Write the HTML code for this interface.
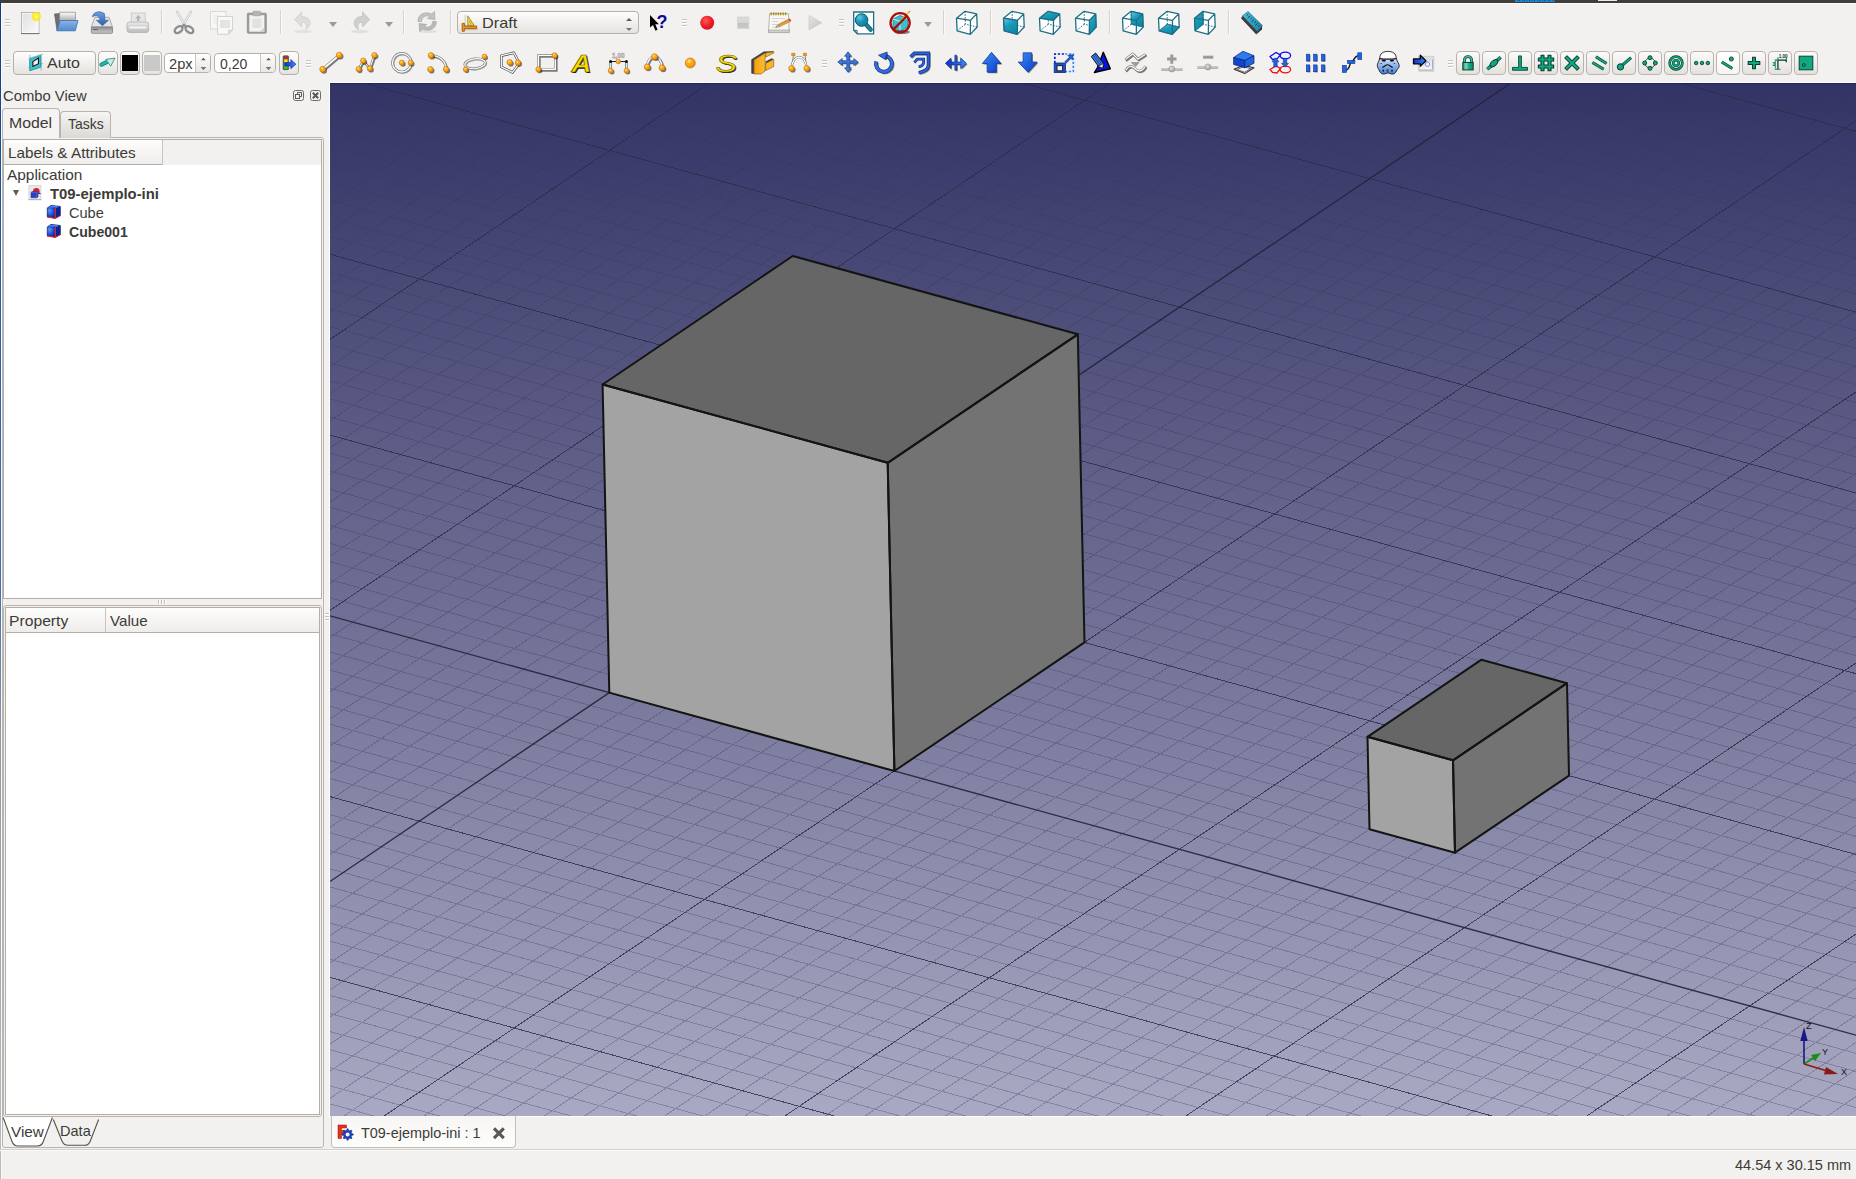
<!DOCTYPE html>
<html lang="es"><head><meta charset="utf-8"><title>FreeCAD</title>
<style>
*{box-sizing:border-box;margin:0;padding:0}
html,body{width:1856px;height:1179px;overflow:hidden;background:#f2f1f0}
body{position:relative;font-family:"Liberation Sans","DejaVu Sans",sans-serif;font-size:15px;color:#3c3b37}
.ic{overflow:visible}
.abs,.ic,.hd,.sp,.da,.sb,.t{position:absolute}
.t{white-space:nowrap;line-height:1;transform-origin:0 0}
.topbar{left:0;top:0;width:1856px;height:3px;background:#403e3a}
.topbar2{left:1px;top:3px;width:1855px;height:1px;background:#fbfaf9}
.leftstrip{left:0;top:2px;width:1px;height:1177px;background:linear-gradient(#0f3a7a 0,#1c5bab 20%,#3f6fae 50%,#8b97aa 62%,#b9bcc2 100%)}
.leftstrip2{left:1px;top:3px;width:1px;height:1176px;background:#fbfaf9}
.hd{width:5px;height:8px;background:linear-gradient(#c8c4bf 0,#c8c4bf 1px,#fff 1px,#fff 2px,transparent 2px,transparent 3px,#c8c4bf 3px,#c8c4bf 4px,#fff 4px,#fff 5px,transparent 5px,transparent 6px,#c8c4bf 6px,#c8c4bf 7px,#fff 7px,#fff 8px)}
.sp{width:2px;height:24px;border-left:1px solid #d6d2cd;border-right:1px solid #fbfaf9}
.da{width:0;height:0;border-left:4.1px solid transparent;border-right:4.1px solid transparent;border-top:5.4px solid #9c9893}
.sb{top:51px;width:24px;height:24px;border:1px solid #b9b4ad;border-radius:4px;background:linear-gradient(#fbfbfa,#e4e1dd)}
.btn{border:1px solid #b5b0a9;border-radius:4px;background:linear-gradient(#fdfdfc,#e6e3df)}
.spin{border:1px solid #b5b0a9;border-radius:4px;background:#fff}
.v3dwrap{left:330px;top:83px;width:1526px;height:1033px;background:linear-gradient(#333365 0,#a9a9c3 100%);overflow:hidden}
.v3d{position:absolute;left:0;top:0}
.frame{border:1px solid #b4aea6;background:#fff}
.hdr{background:linear-gradient(#fdfdfc,#efedeb);border-right:1px solid #c9c4be;border-bottom:1px solid #b4aea6}
.spinr{border-left:1px solid #c9c5bf;border-radius:0 3px 3px 0;background:linear-gradient(#fdfdfc,#e9e7e4)}
.sb.hov{background:linear-gradient(#ffffff,#f6f5f4)}

</style></head>
<body>
<svg width="0" height="0" style="position:absolute"><defs>
<linearGradient id="gpaper" x1="0" y1="0" x2="1" y2="1"><stop offset="0" stop-color="#dedede"/><stop offset="1" stop-color="#fbfbfb"/></linearGradient>
<radialGradient id="gyel"><stop offset="0" stop-color="#ffffe8"/><stop offset=".3" stop-color="#fdf23c"/><stop offset=".75" stop-color="#f6e820" stop-opacity=".9"/><stop offset="1" stop-color="#f6e820" stop-opacity="0"/></radialGradient>
<linearGradient id="gpap2" x1="0" y1="0" x2="0" y2="1"><stop offset="0" stop-color="#fdfdfd"/><stop offset="1" stop-color="#a9a9a9"/></linearGradient>
<linearGradient id="gfold" x1="0" y1="0" x2="0" y2="1"><stop offset="0" stop-color="#8db3e2"/><stop offset="1" stop-color="#4f8bd0"/></linearGradient>
<linearGradient id="gdrive" x1="0" y1="0" x2="0" y2="1"><stop offset="0" stop-color="#8f8f8f"/><stop offset="1" stop-color="#c9c9c9"/></linearGradient>
<linearGradient id="gblue" x1="0" y1="0" x2="0" y2="1"><stop offset="0" stop-color="#6b9fdc"/><stop offset="1" stop-color="#2c62ae"/></linearGradient>
<linearGradient id="gprn" x1="0" y1="0" x2="0" y2="1"><stop offset="0" stop-color="#e9e9e9"/><stop offset="1" stop-color="#bcbcbc"/></linearGradient>
<radialGradient id="gred" cx=".4" cy=".35" r=".7"><stop offset="0" stop-color="#ff5a5a"/><stop offset=".6" stop-color="#ee1c24"/><stop offset="1" stop-color="#d0141c"/></radialGradient>
<linearGradient id="gstop" x1="0" y1="0" x2="0" y2="1"><stop offset="0" stop-color="#dcdcdb"/><stop offset=".5" stop-color="#d6d6d5"/><stop offset=".55" stop-color="#c2c2c1"/><stop offset="1" stop-color="#c9c9c8"/></linearGradient>
<linearGradient id="gplay" x1="0" y1="0" x2="1" y2="1"><stop offset="0" stop-color="#e4e4e3"/><stop offset="1" stop-color="#c3c3c2"/></linearGradient>
<radialGradient id="gteal" cx=".35" cy=".3" r=".8"><stop offset="0" stop-color="#63c7e8"/><stop offset=".5" stop-color="#1593b3"/><stop offset="1" stop-color="#0d7f9c"/></radialGradient>
<linearGradient id="gface" x1="0" y1="0" x2=".6" y2="1"><stop offset="0" stop-color="#6ccaf0"/><stop offset=".45" stop-color="#1d9bbb"/><stop offset="1" stop-color="#0b88a4"/></linearGradient>
<linearGradient id="gruler" x1="0" y1="0" x2="1" y2="1"><stop offset="0" stop-color="#4fc0e6"/><stop offset="1" stop-color="#1685a6"/></linearGradient>
<radialGradient id="gball" cx=".38" cy=".32" r=".75"><stop offset="0" stop-color="#ffe9a8"/><stop offset=".3" stop-color="#ffb320"/><stop offset="1" stop-color="#ee8600"/></radialGradient>
<linearGradient id="gorange" x1="0" y1="0" x2="1" y2="0"><stop offset="0" stop-color="#f79a14"/><stop offset="1" stop-color="#fbc02a"/></linearGradient>
<linearGradient id="gbl" x1="0" y1="0" x2="1" y2="1"><stop offset="0" stop-color="#3a8cf6"/><stop offset="1" stop-color="#0b3ccc"/></linearGradient>
<linearGradient id="gbl2" x1="0" y1="0" x2="1" y2="0"><stop offset="0" stop-color="#0b2fd0"/><stop offset="1" stop-color="#3a8cf6"/></linearGradient>
<radialGradient id="ggrayb" cx=".4" cy=".35" r=".7"><stop offset="0" stop-color="#dedede"/><stop offset="1" stop-color="#9c9c9c"/></radialGradient>
<linearGradient id="gtroop" x1="0" y1="0" x2="0" y2="1"><stop offset="0" stop-color="#ffffff"/><stop offset=".33" stop-color="#fdfdfd"/><stop offset=".42" stop-color="#b9d2f4"/><stop offset="1" stop-color="#3f7fdc"/></linearGradient>
<linearGradient id="glock" x1="0" y1="0" x2="1" y2="0"><stop offset="0" stop-color="#0c8a68"/><stop offset=".3" stop-color="#7fdcc0"/><stop offset=".6" stop-color="#10a97f"/><stop offset="1" stop-color="#0c8a68"/></linearGradient>
<radialGradient id="gcubef" cx=".3" cy=".25" r=".9"><stop offset="0" stop-color="#5a96f6"/><stop offset=".6" stop-color="#1a44c8"/><stop offset="1" stop-color="#0a1f9a"/></radialGradient>
</defs></svg>

<div class="abs topbar"></div><div class="abs topbar2"></div>
<div class="abs" style="left:1515px;top:0;width:40px;height:1px;background:repeating-linear-gradient(90deg,#1a8ad8 0,#1a8ad8 2px,#2d5f86 2px,#2d5f86 3px,#1a8ad8 3px,#1a8ad8 4px,#403e3a 4px,#403e3a 5px)"></div><div class="abs" style="left:1515px;top:1px;width:40px;height:1px;background:#1787d6"></div>
<div class="abs" style="left:1598px;top:0;width:19px;height:1px;background:#eceae7"></div>
<div class="abs leftstrip"></div><div class="abs leftstrip2"></div>
<div class="hd" style="left:5px;top:19px"></div><svg class="ic" style="left:18px;top:10px" width="24" height="24" viewBox="0 0 24 24"><rect x="3.4" y="2.4" width="17.6" height="21" fill="url(#gpaper)" stroke="#a9a9a7" stroke-width=".8"/><path d="M3,23.6H21.4" stroke="#707070" stroke-width="1"/><rect x="4.4" y="3.4" width="15.6" height="19" fill="none" stroke="#fff" stroke-opacity=".8" stroke-width=".8"/><circle cx="18.3" cy="6.5" r="5.3" fill="url(#gyel)"/></svg><svg class="ic" style="left:54px;top:10px" width="24" height="24" viewBox="0 0 24 24"><path d="M0.5,4L5.5,3.5L6,12L3,20.5z" fill="#6f6f6f" stroke="#555" stroke-width=".6"/><path d="M5.6,2.3H21.5V11H5.6z" fill="url(#gpap2)" stroke="#8a8a8a" stroke-width=".7"/><path d="M6,10.5H24L21.3,20.8H2.8z" fill="url(#gfold)" stroke="#3b6fb4" stroke-width=".8"/></svg><svg class="ic" style="left:90px;top:10px" width="24" height="24" viewBox="0 0 24 24"><path d="M4.8,7.3H19L22.5,17H1.3z" fill="#e4e4e4" stroke="#9a9a9a" stroke-width=".8"/><rect x="1.3" y="17" width="21.2" height="6.3" rx="1" fill="url(#gdrive)" stroke="#7d7d7d" stroke-width=".8"/><path d="M3,19.5h5" stroke="#666" stroke-width="1"/><path d="M2.3,6.8C3.5,1.5 10,0.3 14.5,3.8L15,10.3H18.5L12.4,15.8L6.4,10.3H10C10,6 6,4.5 2.3,6.8z" fill="url(#gblue)" stroke="#2b5da5" stroke-width=".6"/></svg><svg class="ic" style="left:126px;top:10px" width="24" height="24" viewBox="0 0 24 24"><rect x="5.2" y="3" width="14" height="10" fill="#e6e6e6" stroke="#c4c4c4" stroke-width=".8"/><path d="M12.2,5l3,3.2h-1.8v2.8h-2.4v-2.8h-1.8z" fill="#b4b4b4"/><rect x="1" y="12" width="21.6" height="10.5" rx="2.5" fill="url(#gprn)" stroke="#b0b0b0" stroke-width=".8"/><rect x="3" y="16.2" width="17.6" height="2.6" rx="1.2" fill="#f6f6f6" stroke="#c6c6c6" stroke-width=".5"/></svg><div class="sp" style="left:161px;top:10px"></div><svg class="ic" style="left:172px;top:10px" width="24" height="24" viewBox="0 0 24 24"><path d="M5.2,2.2L13.6,16.5M18.8,2.2L10.4,16.5" stroke="#c4c4c4" stroke-width="2.6" stroke-linecap="round"/><path d="M5.2,2.2L13.6,16.5M18.8,2.2L10.4,16.5" stroke="#f3f3f3" stroke-width="1.2" stroke-linecap="round"/><ellipse cx="6.6" cy="19.6" rx="4.4" ry="2.8" transform="rotate(-38 6.6 19.6)" fill="none" stroke="#8e8e8e" stroke-width="2.4"/><ellipse cx="17.4" cy="19.6" rx="4.4" ry="2.8" transform="rotate(38 17.4 19.6)" fill="none" stroke="#8e8e8e" stroke-width="2.4"/><path d="M10.2,16.8L12,14.5L13.8,16.8" fill="none" stroke="#8e8e8e" stroke-width="2"/></svg><svg class="ic" style="left:209px;top:10px" width="24" height="24" viewBox="0 0 24 24"><rect x="1.5" y="1.5" width="15.5" height="17.5" fill="#f7f7f6" stroke="#d6d6d5" stroke-width=".9"/><path d="M4,6h8M4,8.3h8M4,10.6h8M4,12.9h8" stroke="#e2e2e2" stroke-width=".8"/><path d="M8.5,6.5H23.5V20L19.5,24.3H8.5z" fill="#f8f8f7" stroke="#cfcfce" stroke-width=".9"/><rect x="11" y="10" width="10" height="8" fill="#e4e4e3"/><path d="M23.5,20L19.5,24.3V20z" fill="#dcdcdc" stroke="#cfcfce" stroke-width=".6"/></svg><svg class="ic" style="left:245px;top:10px" width="24" height="24" viewBox="0 0 24 24"><rect x="2.3" y="3.2" width="19" height="20" rx="1" fill="#9c9c9c" stroke="#8b8b8b" stroke-width=".8"/><rect x="4.3" y="5.2" width="15" height="16.5" fill="#f3f3f2"/><rect x="7.5" y="8.5" width="9" height="9.5" fill="#e2e2e1"/><rect x="7.8" y="1.2" width="8" height="4.6" rx="1" fill="#b5b5b5" stroke="#9a9a9a" stroke-width=".6"/><path d="M19.3,17.5V21.7H15z" fill="#cfcfcf"/></svg><div class="sp" style="left:280px;top:10px"></div><svg class="ic" style="left:291px;top:10px" width="24" height="24" viewBox="0 0 24 24"><ellipse cx="12" cy="21.5" rx="9" ry="1.8" fill="#000" fill-opacity=".06"/><path transform="translate(1.2,0)" d="M9.5,1.8L2.5,9.5L9.5,17V12.5C13.5,12 15,14.5 13.5,19.5C20.5,15.5 19,6.5 9.5,6.5z" fill="#dddddc" stroke="#cdcdcc" stroke-width=".7"/></svg><div class="da" style="left:328.5px;top:21.8px"></div><svg class="ic" style="left:348px;top:10px" width="24" height="24" viewBox="0 0 24 24"><ellipse cx="12" cy="21.5" rx="9" ry="1.8" fill="#000" fill-opacity=".07"/><path d="M14.5,1.8L21.5,9.5L14.5,17V12.5C10.5,12 9,14.5 10.5,19.5C3.5,15.5 5,6.5 14.5,6.5z" fill="#cfcfce" stroke="#bdbdbc" stroke-width=".7"/></svg><div class="da" style="left:384.7px;top:21.8px"></div><div class="sp" style="left:403px;top:10px"></div><svg class="ic" style="left:415px;top:10px" width="24" height="24" viewBox="0 0 24 24"><ellipse cx="13" cy="21.5" rx="9" ry="1.6" fill="#000" fill-opacity=".07"/><path d="M3,11.5C2.5,4.5 10,0.8 16.5,4L19.5,1.5L20,9.5L12.5,8.5L14.8,6.3C11,4.8 6.5,7 6.5,11.5z" fill="#c2c2c1" stroke="#a9a9a8" stroke-width=".7"/><path d="M21.2,11.5C21.7,18.5 14.2,22.2 7.7,19L4.7,21.5L4.2,13.5L11.7,14.5L9.4,16.7C13.2,18.2 17.7,16 17.7,11.5z" fill="#bababa" stroke="#a5a5a4" stroke-width=".7"/></svg><div class="sp" style="left:450px;top:10px"></div><svg class="ic" style="left:645px;top:10px" width="24" height="24" viewBox="0 0 24 24"><path d="M5,4.9V17.6L8,15L10.5,20.7L12.6,19.7L10.3,14.3H13.9z" fill="#000"/><text x="11.6" y="17.9" font-family="Liberation Sans,sans-serif" font-weight="bold" font-size="18" fill="#0a0a96">?</text></svg><div class="hd" style="left:682px;top:19px"></div><svg class="ic" style="left:695px;top:10px" width="24" height="24" viewBox="0 0 24 24"><circle cx="12.2" cy="12.8" r="7" fill="url(#gred)"/></svg><svg class="ic" style="left:731px;top:10px" width="24" height="24" viewBox="0 0 24 24"><rect x="6.6" y="7" width="11.2" height="11.4" fill="url(#gstop)" stroke="#d3d3d2" stroke-width=".8"/></svg><svg class="ic" style="left:767px;top:10px" width="24" height="24" viewBox="0 0 24 24"><path d="M2.6,3.6H21.4L22.3,22.2H1.5z" fill="#f6f6f4" stroke="#a5a5a1" stroke-width=".8"/><path d="M1.5,20H22.3V22.6H1.5z" fill="#cfcfcb" stroke="#9c9c98" stroke-width=".6"/><path d="M5,8.5h13M5,11.5h6M5,14.5h5M5,17.5h5" stroke="#cdcdc9" stroke-width=".8"/><path d="M4.2,2.4v2.8M6.6,2.4v2.8M9,2.4v2.8M11.4,2.4v2.8M13.8,2.4v2.8M16.2,2.4v2.8M18.6,2.4v2.8" stroke="#b08a10" stroke-width="1.4"/><path d="M8.8,17.2L10.8,14.7L21.4,9.2L23.3,11.5L12.3,16.8z" fill="#f0a43c" stroke="#9a5c14" stroke-width=".5"/><path d="M21.4,9.2L22.9,8.5L24.4,10.8L23.3,11.5z" fill="#e2363c"/><path d="M8.8,17.2L10.8,14.7L12.3,16.8z" fill="#ecd9ae" stroke="#7a5a2a" stroke-width=".4"/><path d="M11.5,15.3L22,10" stroke="#c47a1a" stroke-width=".6"/></svg><svg class="ic" style="left:803px;top:10px" width="24" height="24" viewBox="0 0 24 24"><path d="M6,5.5L18.7,12.7L6,19.8z" fill="url(#gplay)" stroke="#c9c9c8" stroke-width=".7"/></svg><div class="hd" style="left:839px;top:19px"></div><svg class="ic" style="left:852px;top:10px" width="24" height="24" viewBox="0 0 24 24"><path d="M1.7,2H21.6V23.8H5.3L1.7,20.3z" fill="#fff" stroke="#1d6e84" stroke-width="1.3"/><path d="M2.1,20.4H5.1V23.4" fill="none" stroke="#1d6e84" stroke-width="1"/><path d="M14,14.6L18.6,19.6" stroke="#145a6c" stroke-width="4.4" stroke-linecap="round"/><path d="M14,14.6L18.6,19.6" stroke="#1c86a2" stroke-width="2.8" stroke-linecap="round"/><circle cx="9.6" cy="10" r="6.3" fill="url(#gteal)" stroke="#145a6c" stroke-width="1"/></svg><svg class="ic" style="left:888px;top:10px" width="24" height="24" viewBox="0 0 24 24"><path d="M5,9L12,5.5L19.5,8V17L12,21.5L5,18z" fill="#39c0cd" stroke="#1b7d8c" stroke-width=".7"/><path d="M5,9L12,11.5L19.5,8M12,11.5V21.5" fill="none" stroke="#e8fbfd" stroke-width=".8"/><path d="M14,9L20.5,2.5" stroke="#e2c11a" stroke-width="1.6"/><circle cx="21.3" cy="1.8" r="1" fill="#f08a1a"/><ellipse cx="14" cy="22" rx="8" ry="2" fill="#222" fill-opacity=".55"/><circle cx="12.1" cy="12.8" r="9.6" fill="none" stroke="#a80e0e" stroke-width="2.3"/><path d="M5.3,19.6L18.9,6" stroke="#a80e0e" stroke-width="2.3"/></svg><div class="da" style="left:924.2px;top:21.8px"></div><div class="sp" style="left:943px;top:10px"></div><svg class="ic" style="left:954px;top:10px" width="24" height="24" viewBox="0 0 24 24"><polygon points="2.5,8.2 11.1,1.3 22.7,3.9 23.2,17.0 16.3,24.4 3.1,20.8" fill="#fff"/><path d="M11.1,1.3L11.3,14.2M3.1,20.8L11.3,14.2M23.2,17.0L11.3,14.2" stroke="#1f6f84" stroke-width="1" stroke-dasharray="1.6,1.3" fill="none"/><path d="M2.5,8.2 L11.1,1.3 L22.7,3.9 L23.2,17.0 L16.3,24.4 L3.1,20.8 z M2.5,8.2L16.5,10.3M22.7,3.9L16.5,10.3M16.3,24.4L16.5,10.3" stroke="#1f6f84" stroke-width="1.3" stroke-linejoin="round" fill="none"/></svg><div class="sp" style="left:990px;top:10px"></div><svg class="ic" style="left:1001px;top:10px" width="24" height="24" viewBox="0 0 24 24"><polygon points="2.5,8.2 11.1,1.3 22.7,3.9 23.2,17.0 16.3,24.4 3.1,20.8" fill="#fff"/><path d="M11.1,1.3L11.3,14.2M3.1,20.8L11.3,14.2M23.2,17.0L11.3,14.2" stroke="#1f6f84" stroke-width="1" stroke-dasharray="1.6,1.3" fill="none"/><polygon points="2.5,8.2 16.5,10.3 16.3,24.4 3.1,20.8" fill="url(#gface)" stroke="#16647a" stroke-width=".8"/><path d="M2.5,8.2 L11.1,1.3 L22.7,3.9 L23.2,17.0 L16.3,24.4 L3.1,20.8 z M2.5,8.2L16.5,10.3M22.7,3.9L16.5,10.3M16.3,24.4L16.5,10.3" stroke="#1f6f84" stroke-width="1.3" stroke-linejoin="round" fill="none"/></svg><svg class="ic" style="left:1037px;top:10px" width="24" height="24" viewBox="0 0 24 24"><polygon points="2.5,8.2 11.1,1.3 22.7,3.9 23.2,17.0 16.3,24.4 3.1,20.8" fill="#fff"/><path d="M11.1,1.3L11.3,14.2M3.1,20.8L11.3,14.2M23.2,17.0L11.3,14.2" stroke="#1f6f84" stroke-width="1" stroke-dasharray="1.6,1.3" fill="none"/><polygon points="2.5,8.2 11.1,1.3 22.7,3.9 16.5,10.3" fill="url(#gface)" stroke="#16647a" stroke-width=".8"/><path d="M2.5,8.2 L11.1,1.3 L22.7,3.9 L23.2,17.0 L16.3,24.4 L3.1,20.8 z M2.5,8.2L16.5,10.3M22.7,3.9L16.5,10.3M16.3,24.4L16.5,10.3" stroke="#1f6f84" stroke-width="1.3" stroke-linejoin="round" fill="none"/></svg><svg class="ic" style="left:1073px;top:10px" width="24" height="24" viewBox="0 0 24 24"><polygon points="2.5,8.2 11.1,1.3 22.7,3.9 23.2,17.0 16.3,24.4 3.1,20.8" fill="#fff"/><path d="M11.1,1.3L11.3,14.2M3.1,20.8L11.3,14.2M23.2,17.0L11.3,14.2" stroke="#1f6f84" stroke-width="1" stroke-dasharray="1.6,1.3" fill="none"/><polygon points="16.5,10.3 22.7,3.9 23.2,17.0 16.3,24.4" fill="url(#gface)" stroke="#16647a" stroke-width=".8"/><path d="M2.5,8.2 L11.1,1.3 L22.7,3.9 L23.2,17.0 L16.3,24.4 L3.1,20.8 z M2.5,8.2L16.5,10.3M22.7,3.9L16.5,10.3M16.3,24.4L16.5,10.3" stroke="#1f6f84" stroke-width="1.3" stroke-linejoin="round" fill="none"/></svg><div class="sp" style="left:1109px;top:10px"></div><svg class="ic" style="left:1120px;top:10px" width="24" height="24" viewBox="0 0 24 24"><polygon points="2.5,8.2 11.1,1.3 22.7,3.9 23.2,17.0 16.3,24.4 3.1,20.8" fill="#fff"/><polygon points="11.1,1.3 22.7,3.9 23.2,17.0 11.3,14.2" fill="url(#gface)" stroke="#16647a" stroke-width=".8"/><path d="M11.1,1.3L11.3,14.2M3.1,20.8L11.3,14.2M23.2,17.0L11.3,14.2" stroke="#1f6f84" stroke-width="1" stroke-dasharray="1.6,1.3" fill="none"/><path d="M2.5,8.2 L11.1,1.3 L22.7,3.9 L23.2,17.0 L16.3,24.4 L3.1,20.8 z M2.5,8.2L16.5,10.3M22.7,3.9L16.5,10.3M16.3,24.4L16.5,10.3" stroke="#1f6f84" stroke-width="1.3" stroke-linejoin="round" fill="none"/></svg><svg class="ic" style="left:1156px;top:10px" width="24" height="24" viewBox="0 0 24 24"><polygon points="2.5,8.2 11.1,1.3 22.7,3.9 23.2,17.0 16.3,24.4 3.1,20.8" fill="#fff"/><polygon points="3.1,20.8 16.3,24.4 23.2,17.0 11.3,14.2" fill="url(#gface)" stroke="#16647a" stroke-width=".8"/><path d="M11.1,1.3L11.3,14.2M3.1,20.8L11.3,14.2M23.2,17.0L11.3,14.2" stroke="#1f6f84" stroke-width="1" stroke-dasharray="1.6,1.3" fill="none"/><path d="M2.5,8.2 L11.1,1.3 L22.7,3.9 L23.2,17.0 L16.3,24.4 L3.1,20.8 z M2.5,8.2L16.5,10.3M22.7,3.9L16.5,10.3M16.3,24.4L16.5,10.3" stroke="#1f6f84" stroke-width="1.3" stroke-linejoin="round" fill="none"/></svg><svg class="ic" style="left:1192px;top:10px" width="24" height="24" viewBox="0 0 24 24"><polygon points="2.5,8.2 11.1,1.3 22.7,3.9 23.2,17.0 16.3,24.4 3.1,20.8" fill="#fff"/><polygon points="2.5,8.2 11.1,1.3 11.3,14.2 3.1,20.8" fill="url(#gface)" stroke="#16647a" stroke-width=".8"/><path d="M11.1,1.3L11.3,14.2M3.1,20.8L11.3,14.2M23.2,17.0L11.3,14.2" stroke="#1f6f84" stroke-width="1" stroke-dasharray="1.6,1.3" fill="none"/><path d="M2.5,8.2 L11.1,1.3 L22.7,3.9 L23.2,17.0 L16.3,24.4 L3.1,20.8 z M2.5,8.2L16.5,10.3M22.7,3.9L16.5,10.3M16.3,24.4L16.5,10.3" stroke="#1f6f84" stroke-width="1.3" stroke-linejoin="round" fill="none"/></svg><div class="sp" style="left:1228px;top:10px"></div><svg class="ic" style="left:1239px;top:10px" width="24" height="24" viewBox="0 0 24 24"><path d="M2,8.3L3.6,5.7L18.5,21.3L17.3,24.6z" fill="#3c3c3c"/><path d="M17.3,24.6L18.5,21.3L23.3,15.6L22.8,19.5z" fill="#2b2b2b"/><path d="M3.6,5.7L9.1,1.6L23.3,15.4L18.5,21.3z" fill="url(#gruler)" stroke="#14566a" stroke-width=".6"/><path d="M9.4,4L7.6,5.5M11.3,5.9L8.7,8M13.2,7.7L11.4,9.2M15.1,9.6L12.5,11.7M17,11.4L15.2,12.9M18.9,13.3L16.3,15.4M20.8,15.1L19,16.6" stroke="#0c3a48" stroke-width=".9"/></svg><div class="hd" style="left:5px;top:60px"></div><div class="hd" style="left:306px;top:60px"></div><svg class="ic" style="left:319px;top:51px" width="24" height="24" viewBox="0 0 24 24"><path d="M3.7,18.3L20.2,4.2" transform="translate(1,1.1)" fill="none" stroke="#000" stroke-opacity=".5" stroke-width="3.0" stroke-linecap="round"/><path d="M3.7,18.3L20.2,4.2" fill="none" stroke="#7d7d7d" stroke-width="3.0" stroke-linecap="round" stroke-linejoin="round"/><path d="M3.7,18.3L20.2,4.2" fill="none" stroke="#fdfdfd" stroke-width="1.8" stroke-linecap="round" stroke-linejoin="round"/><circle cx="5.0" cy="19.7" r="3.0" fill="#000" fill-opacity=".5"/><circle cx="3.7" cy="18.3" r="3.0" fill="url(#gball)" stroke="#b56a00" stroke-width=".5"/><circle cx="21.5" cy="5.6" r="3.0" fill="#000" fill-opacity=".5"/><circle cx="20.2" cy="4.2" r="3.0" fill="url(#gball)" stroke="#b56a00" stroke-width=".5"/></svg><svg class="ic" style="left:355px;top:51px" width="24" height="24" viewBox="0 0 24 24"><path d="M3.6,18.1L8.2,9.7L14.8,17.5L19.4,4.2" transform="translate(1,1.1)" fill="none" stroke="#000" stroke-opacity=".5" stroke-width="2.2" stroke-linecap="round"/><path d="M3.6,18.1L8.2,9.7L14.8,17.5L19.4,4.2" fill="none" stroke="#7d7d7d" stroke-width="2.2" stroke-linecap="round" stroke-linejoin="round"/><path d="M3.6,18.1L8.2,9.7L14.8,17.5L19.4,4.2" fill="none" stroke="#fdfdfd" stroke-width="1.0" stroke-linecap="round" stroke-linejoin="round"/><circle cx="4.9" cy="19.5" r="2.7" fill="#000" fill-opacity=".5"/><circle cx="3.6" cy="18.1" r="2.7" fill="url(#gball)" stroke="#b56a00" stroke-width=".5"/><circle cx="9.5" cy="11.1" r="2.7" fill="#000" fill-opacity=".5"/><circle cx="8.2" cy="9.7" r="2.7" fill="url(#gball)" stroke="#b56a00" stroke-width=".5"/><circle cx="16.1" cy="18.9" r="2.7" fill="#000" fill-opacity=".5"/><circle cx="14.8" cy="17.5" r="2.7" fill="url(#gball)" stroke="#b56a00" stroke-width=".5"/><circle cx="20.7" cy="5.6" r="2.7" fill="#000" fill-opacity=".5"/><circle cx="19.4" cy="4.2" r="2.7" fill="url(#gball)" stroke="#b56a00" stroke-width=".5"/></svg><svg class="ic" style="left:391px;top:51px" width="24" height="24" viewBox="0 0 24 24"><circle cx="11.6" cy="12.5" r="9.3" fill="none" stroke="#000" stroke-opacity=".35" stroke-width="2.4"/><circle cx="10.8" cy="11.7" r="9.3" fill="none" stroke="#7d7d7d" stroke-width="2.6"/><circle cx="10.8" cy="11.7" r="9.3" fill="none" stroke="#fdfdfd" stroke-width="1.3"/><circle cx="12.1" cy="13.1" r="2.6" fill="#000" fill-opacity=".5"/><circle cx="10.8" cy="11.7" r="2.6" fill="url(#gball)" stroke="#b56a00" stroke-width=".5"/><circle cx="21.0" cy="13.1" r="2.6" fill="#000" fill-opacity=".5"/><circle cx="19.7" cy="11.7" r="2.6" fill="url(#gball)" stroke="#b56a00" stroke-width=".5"/></svg><svg class="ic" style="left:427px;top:51px" width="24" height="24" viewBox="0 0 24 24"><path d="M3.9,4.4C12,4.4 19.1,10 19.1,18.3" transform="translate(1,1.1)" fill="none" stroke="#000" stroke-opacity=".5" stroke-width="2.4" stroke-linecap="round"/><path d="M3.9,4.4C12,4.4 19.1,10 19.1,18.3" fill="none" stroke="#7d7d7d" stroke-width="2.4" stroke-linecap="round" stroke-linejoin="round"/><path d="M3.9,4.4C12,4.4 19.1,10 19.1,18.3" fill="none" stroke="#fdfdfd" stroke-width="1.2" stroke-linecap="round" stroke-linejoin="round"/><circle cx="5.2" cy="5.8" r="2.8" fill="#000" fill-opacity=".5"/><circle cx="3.9" cy="4.4" r="2.8" fill="url(#gball)" stroke="#b56a00" stroke-width=".5"/><circle cx="4.7" cy="19.7" r="2.8" fill="#000" fill-opacity=".5"/><circle cx="3.4" cy="18.3" r="2.8" fill="url(#gball)" stroke="#b56a00" stroke-width=".5"/><circle cx="20.4" cy="19.7" r="2.8" fill="#000" fill-opacity=".5"/><circle cx="19.1" cy="18.3" r="2.8" fill="url(#gball)" stroke="#b56a00" stroke-width=".5"/></svg><svg class="ic" style="left:463px;top:51px" width="24" height="24" viewBox="0 0 24 24"><g transform="rotate(-7 12 12.7)"><ellipse cx="12.8" cy="13.6" rx="10.3" ry="4.9" fill="none" stroke="#000" stroke-opacity=".3" stroke-width="2.2"/><ellipse cx="12" cy="12.7" rx="10.3" ry="4.9" fill="none" stroke="#7d7d7d" stroke-width="2.5"/><ellipse cx="12" cy="12.7" rx="10.3" ry="4.9" fill="none" stroke="#fdfdfd" stroke-width="1.2"/></g><circle cx="22.7" cy="6.9" r="2.4" fill="#000" fill-opacity=".5"/><circle cx="21.4" cy="5.5" r="2.4" fill="url(#gball)" stroke="#b56a00" stroke-width=".5"/><circle cx="3.9" cy="19.9" r="2.4" fill="#000" fill-opacity=".5"/><circle cx="2.6" cy="18.5" r="2.4" fill="url(#gball)" stroke="#b56a00" stroke-width=".5"/></svg><svg class="ic" style="left:499px;top:51px" width="24" height="24" viewBox="0 0 24 24"><path d="M2.3,4.7L14.9,1.8L20.4,12.5L13.4,21.4L2.3,15.9z" fill="none" stroke="#3a3a3a" stroke-width="2.5" stroke-linejoin="round"/><path d="M2.3,4.7L14.9,1.8L20.4,12.5L13.4,21.4L2.3,15.9z" fill="none" stroke="#fdfdfd" stroke-width="1.3" stroke-linejoin="round"/><circle cx="12.0" cy="12.7" r="2.8" fill="#000" fill-opacity=".5"/><circle cx="10.7" cy="11.3" r="2.8" fill="url(#gball)" stroke="#b56a00" stroke-width=".5"/><circle cx="20.3" cy="13.1" r="2.8" fill="#000" fill-opacity=".5"/><circle cx="19.0" cy="11.7" r="2.8" fill="url(#gball)" stroke="#b56a00" stroke-width=".5"/></svg><svg class="ic" style="left:535px;top:51px" width="24" height="24" viewBox="0 0 24 24"><path d="M3.4,4.4H20.3V18.3H3.4z" transform="translate(1,1.1)" fill="none" stroke="#000" stroke-opacity=".5" stroke-width="2.6" stroke-linecap="round"/><path d="M3.4,4.4H20.3V18.3H3.4z" fill="none" stroke="#7d7d7d" stroke-width="2.6" stroke-linecap="round" stroke-linejoin="round"/><path d="M3.4,4.4H20.3V18.3H3.4z" fill="none" stroke="#fdfdfd" stroke-width="1.4" stroke-linecap="round" stroke-linejoin="round"/><circle cx="20.9" cy="5.8" r="2.6" fill="#000" fill-opacity=".5"/><circle cx="19.6" cy="4.4" r="2.6" fill="url(#gball)" stroke="#b56a00" stroke-width=".5"/><circle cx="4.7" cy="19.7" r="2.6" fill="#000" fill-opacity=".5"/><circle cx="3.4" cy="18.3" r="2.6" fill="url(#gball)" stroke="#b56a00" stroke-width=".5"/></svg><svg class="ic" style="left:571px;top:51px" width="24" height="24" viewBox="0 0 24 24"><g transform="translate(0.5,20.7) scale(1.12,1)"><text x=".8" y=".8" font-family="Liberation Sans,sans-serif" font-style="italic" font-weight="bold" font-size="24.5" fill="#1c1a00">A</text><text x="0" y="0" font-family="Liberation Sans,sans-serif" font-style="italic" font-weight="bold" font-size="24.5" fill="#f8dc00" stroke="#5a4a00" stroke-width=".6">A</text></g></svg><svg class="ic" style="left:607px;top:51px" width="24" height="24" viewBox="0 0 24 24"><text x="5" y="6.8" font-family="Liberation Sans,sans-serif" font-weight="bold" font-size="6.5" fill="#fff" stroke="#999" stroke-width=".5">1,00</text><path d="M3.6,10.5V19.5M19.4,10.5V19.5" stroke="#6a6a6a" stroke-width="2.4"/><path d="M3.6,10.5V19.5M19.4,10.5V19.5" stroke="#f4f4f4" stroke-width="1"/><path d="M3.6,10.5H19.4" stroke="#222" stroke-width="1"/><circle cx="3.6" cy="10.5" r="1.5" fill="#111"/><circle cx="19.4" cy="10.5" r="1.5" fill="#111"/><circle cx="11.3" cy="10.5" r="2.3" fill="url(#gball)" stroke="#b56a00" stroke-width=".5"/><circle cx="5.0" cy="21.1" r="2.5" fill="#000" fill-opacity=".5"/><circle cx="3.7" cy="19.7" r="2.5" fill="url(#gball)" stroke="#b56a00" stroke-width=".5"/><circle cx="20.8" cy="21.1" r="2.5" fill="#000" fill-opacity=".5"/><circle cx="19.5" cy="19.7" r="2.5" fill="url(#gball)" stroke="#b56a00" stroke-width=".5"/></svg><svg class="ic" style="left:643px;top:51px" width="24" height="24" viewBox="0 0 24 24"><path d="M4.2,15.9C4.2,2.3 19,2.3 19,16.8" transform="translate(1,1.1)" fill="none" stroke="#000" stroke-opacity=".5" stroke-width="2.6" stroke-linecap="round"/><path d="M4.2,15.9C4.2,2.3 19,2.3 19,16.8" fill="none" stroke="#7d7d7d" stroke-width="2.6" stroke-linecap="round" stroke-linejoin="round"/><path d="M4.2,15.9C4.2,2.3 19,2.3 19,16.8" fill="none" stroke="#fdfdfd" stroke-width="1.4" stroke-linecap="round" stroke-linejoin="round"/><circle cx="5.5" cy="17.3" r="3.0" fill="#000" fill-opacity=".5"/><circle cx="4.2" cy="15.9" r="3.0" fill="url(#gball)" stroke="#b56a00" stroke-width=".5"/><circle cx="12.8" cy="7.1" r="3.0" fill="#000" fill-opacity=".5"/><circle cx="11.5" cy="5.7" r="3.0" fill="url(#gball)" stroke="#b56a00" stroke-width=".5"/><circle cx="20.3" cy="18.2" r="3.0" fill="#000" fill-opacity=".5"/><circle cx="19.0" cy="16.8" r="3.0" fill="url(#gball)" stroke="#b56a00" stroke-width=".5"/></svg><svg class="ic" style="left:678px;top:51px" width="24" height="24" viewBox="0 0 24 24"><circle cx="12.3" cy="12" r="5" fill="url(#gball)" stroke="#b56a00" stroke-width=".6"/></svg><svg class="ic" style="left:714px;top:51px" width="24" height="24" viewBox="0 0 24 24"><g transform="translate(1.6,20.6) scale(1.32,1)"><text x=".7" y=".9" font-family="Liberation Sans,sans-serif" font-style="italic" font-size="24.5" fill="#222">S</text><text x="0" y="0" font-family="Liberation Sans,sans-serif" font-style="italic" font-size="24.5" fill="#f5dc08" stroke="#6b5a00" stroke-width=".5">S</text></g></svg><svg class="ic" style="left:750px;top:51px" width="24" height="24" viewBox="0 0 24 24"><path d="M1.3,8.4L13.8,0.4L22.5,0.2L24.2,0.9L15.6,2.1L15.1,2.1L3.9,9.1V23L1.3,22.6z" fill="#3d4046"/><path d="M15.6,10.6L21.6,7.2L23.7,8.3L15.6,12.5z" fill="#3d4046"/><path d="M3.9,9.1L15.1,2.1V20L10.9,23H3.9z" fill="url(#gorange)" stroke="#5a3a08" stroke-width=".5" stroke-linejoin="round"/><path d="M15.6,1.9L23.9,0.8V1.9L15.6,6.2z" fill="#f9b524" stroke="#5a3a08" stroke-width=".5" stroke-linejoin="round"/><path d="M15.6,12.5L23.7,8.3V15.5L15.6,19.6z" fill="#f9b524" stroke="#5a3a08" stroke-width=".5" stroke-linejoin="round"/></svg><svg class="ic" style="left:787px;top:51px" width="24" height="24" viewBox="0 0 24 24"><path d="M4.5,17.4L6.4,4.5M19.7,17.4L18.1,4.5" stroke="#555" stroke-width=".7"/><path d="M4.5,17.4C5.5,2.3 18.7,2.3 19.7,17.4" fill="none" stroke="#7d7d7d" stroke-width="2.4" stroke-linecap="round" stroke-linejoin="round"/><path d="M4.5,17.4C5.5,2.3 18.7,2.3 19.7,17.4" fill="none" stroke="#fdfdfd" stroke-width="1.2" stroke-linecap="round" stroke-linejoin="round"/><rect x="4.8" y="2.1" width="3.2" height="2.7" fill="#f59a0c" stroke="#b56a00" stroke-width=".4"/><rect x="16.5" y="2.1" width="3.2" height="2.7" fill="#f59a0c" stroke="#b56a00" stroke-width=".4"/><circle cx="5.8" cy="18.8" r="2.8" fill="#000" fill-opacity=".5"/><circle cx="4.5" cy="17.4" r="2.8" fill="url(#gball)" stroke="#b56a00" stroke-width=".5"/><circle cx="21.0" cy="18.8" r="2.8" fill="#000" fill-opacity=".5"/><circle cx="19.7" cy="17.4" r="2.8" fill="url(#gball)" stroke="#b56a00" stroke-width=".5"/></svg><div class="hd" style="left:822px;top:60px"></div><svg class="ic" style="left:835px;top:51px" width="24" height="24" viewBox="0 0 24 24"><path d="M13,0.8L16.4,5.2H14.2V9.8H18.8V7.6L23.1,11L18.8,14.4V12.2H14.2V16.8H16.4L13,21.2L9.6,16.8H11.8V12.2H7.2V14.4L2.8,11L7.2,7.6V9.8H11.8V5.2H9.6z" transform="translate(1.1,1.1)" fill="#000" fill-opacity=".5"/><path d="M13,0.8L16.4,5.2H14.2V9.8H18.8V7.6L23.1,11L18.8,14.4V12.2H14.2V16.8H16.4L13,21.2L9.6,16.8H11.8V12.2H7.2V14.4L2.8,11L7.2,7.6V9.8H11.8V5.2H9.6z" fill="#3a7be0" stroke="#1b3f9a" stroke-width="0.7" stroke-linejoin="round" /></svg><svg class="ic" style="left:872px;top:51px" width="24" height="24" viewBox="0 0 24 24"><path d="M13,4.8A8,8 0 1 1 4.2,10.5" transform="translate(1.1,1.1)" fill="none" stroke="#000" stroke-opacity=".5" stroke-width="3"/><path d="M13,4.8A8,8 0 1 1 4.2,10.5" fill="none" stroke="#13308a" stroke-width="3.8"/><path d="M13,4.8A8,8 0 1 1 4.2,10.5" fill="none" stroke="#2e6fe0" stroke-width="2.6"/><path d="M6.5,4.2L15.2,1L13.4,8.5z" transform="translate(1.1,1.1)" fill="#000" fill-opacity=".5"/><path d="M6.5,4.2L15.2,1L13.4,8.5z" fill="#2e6fe0" stroke="#13308a" stroke-width="0.7" stroke-linejoin="round" /></svg><svg class="ic" style="left:908px;top:51px" width="24" height="24" viewBox="0 0 24 24"><path d="M2.5,5.7L6.4,2.3H20.4V14.4Q20,20 10.7,21.7" transform="translate(1,1)" fill="none" stroke="#000" stroke-opacity=".45" stroke-width="2.8"/><path d="M2.5,5.7L6.4,2.3H20.4V14.4Q20,20 10.7,21.7" fill="none" stroke="#13308a" stroke-width="3.4"/><path d="M2.5,5.7L6.4,2.3H20.4V14.4Q20,20 10.7,21.7" fill="none" stroke="#2a63d6" stroke-width="2"/><path d="M6.4,11.5L9.3,8.1H15.6V12Q15,15 10.7,15.9" fill="none" stroke="#13308a" stroke-width="2.8"/><path d="M6.4,11.5L9.3,8.1H15.6V12Q15,15 10.7,15.9" fill="none" stroke="#2a63d6" stroke-width="1.5"/></svg><svg class="ic" style="left:944px;top:51px" width="24" height="24" viewBox="0 0 24 24"><path d="M1.4,12.3L7,7V11.1H10.9V4.2H12.7V11.1H16.7V7L22.3,12.3L16.7,17.6V13.5H12.7V19.2H10.9V13.5H7V17.6z" transform="translate(1.1,1.1)" fill="#000" fill-opacity=".5"/><path d="M1.4,12.3L7,7V11.1H10.9V4.2H12.7V11.1H16.7V7L22.3,12.3L16.7,17.6V13.5H12.7V19.2H10.9V13.5H7V17.6z" fill="url(#gbl2)" stroke="#13308a" stroke-width="0.7" stroke-linejoin="round" /></svg><svg class="ic" style="left:980px;top:51px" width="24" height="24" viewBox="0 0 24 24"><path d="M11.5,1.3L21.2,12.5H16.3V21.2H7.1V12.5H2.3z" transform="translate(1.1,1.1)" fill="#000" fill-opacity=".5"/><path d="M11.5,1.3L21.2,12.5H16.3V21.2H7.1V12.5H2.3z" fill="url(#gbl)" stroke="#13308a" stroke-width="0.7" stroke-linejoin="round" /></svg><svg class="ic" style="left:1016px;top:51px" width="24" height="24" viewBox="0 0 24 24"><path d="M7.1,1.8H15.8V11H21.2L11.9,21.2L2.2,11H7.1z" transform="translate(1.1,1.1)" fill="#000" fill-opacity=".5"/><path d="M7.1,1.8H15.8V11H21.2L11.9,21.2L2.2,11H7.1z" fill="url(#gbl)" stroke="#13308a" stroke-width="0.7" stroke-linejoin="round" /></svg><svg class="ic" style="left:1052px;top:51px" width="24" height="24" viewBox="0 0 24 24"><path d="M2.8,12V3H12" fill="none" stroke="#0b1fd6" stroke-width="1.7" stroke-dasharray="2.3,1.7"/><path d="M13,3H21.3V20.5H13.5" fill="none" stroke="#2a8cff" stroke-width="1.7" stroke-dasharray="2.3,1.7"/><rect x="2.2" y="12" width="11.2" height="9.6" fill="#1b4fd0" stroke="#0f2a80" stroke-width=".8"/><rect x="5" y="14.6" width="5.6" height="5.2" fill="#f0f0f0" stroke="#222" stroke-width="1"/><path d="M12.8,10.8L17.5,6L15.8,4.3L21,3.8L20.5,9L18.9,7.4L14.2,12.2z" fill="#1f5fdc" stroke="#0f2a80" stroke-width=".6"/></svg><svg class="ic" style="left:1088px;top:51px" width="24" height="24" viewBox="0 0 24 24"><path d="M15.3,1.3L22.3,17.8L6.4,21.5L9.5,16.5z" fill="#0a14e0" stroke="#000" stroke-width="1.4" stroke-linejoin="round"/><path d="M3.3,5.5L7.6,2L15.6,12.5L14.6,17.2L10.3,15.2z" fill="#3f7fe0" stroke="#000" stroke-width=".9" stroke-linejoin="round"/><path d="M5,4.2L12,14M6.5,3L13.5,13" stroke="#14389a" stroke-width=".8"/><path d="M10.3,15.2L15.6,12.5L14.6,17.2z" fill="#f3f3f3" stroke="#000" stroke-width=".6"/></svg><svg class="ic" style="left:1124px;top:51px" width="24" height="24" viewBox="0 0 24 24"><path d="M1.9,8.1L8.7,2.8L14,8.1L20.8,3.7" transform="translate(1,1.1)" fill="none" stroke="#000" stroke-opacity=".5" stroke-width="2.4" stroke-linecap="round"/><path d="M1.9,8.1L8.7,2.8L14,8.1L20.8,3.7" fill="none" stroke="#7d7d7d" stroke-width="2.4" stroke-linecap="round" stroke-linejoin="round"/><path d="M1.9,8.1L8.7,2.8L14,8.1L20.8,3.7" fill="none" stroke="#fdfdfd" stroke-width="1.2" stroke-linecap="round" stroke-linejoin="round"/><path d="M7.2,11.5H15L11.6,15.6z" fill="#9c9c9c" stroke="#777" stroke-width=".5"/><path d="M2,18.8C6,13 9,15.5 11.5,18C14.5,21 18,20.5 21,15.9" transform="translate(1,1.1)" fill="none" stroke="#000" stroke-opacity=".5" stroke-width="2.4" stroke-linecap="round"/><path d="M2,18.8C6,13 9,15.5 11.5,18C14.5,21 18,20.5 21,15.9" fill="none" stroke="#7d7d7d" stroke-width="2.4" stroke-linecap="round" stroke-linejoin="round"/><path d="M2,18.8C6,13 9,15.5 11.5,18C14.5,21 18,20.5 21,15.9" fill="none" stroke="#fdfdfd" stroke-width="1.2" stroke-linecap="round" stroke-linejoin="round"/></svg><svg class="ic" style="left:1160px;top:51px" width="24" height="24" viewBox="0 0 24 24"><path d="M11.8,3.4V12.8M7.1,8.1H16.5" stroke="#9a9a9a" stroke-width="3"/><path d="M1.3,18.5H22.6" stroke="#a7a7a7" stroke-width="2.6"/><path d="M1.3,18H22.6" stroke="#d9d9d9" stroke-width="1"/><circle cx="11.8" cy="18" r="3.1" fill="url(#ggrayb)" stroke="#8e8e8e" stroke-width=".5"/></svg><svg class="ic" style="left:1196px;top:51px" width="24" height="24" viewBox="0 0 24 24"><rect x="7.1" y="4.7" width="10.2" height="3" fill="#9a9a9a"/><path d="M1.3,16.5H22.1" stroke="#a7a7a7" stroke-width="2.6"/><path d="M1.3,16H22.1" stroke="#d9d9d9" stroke-width="1"/><circle cx="11.9" cy="16" r="3.1" fill="url(#ggrayb)" stroke="#8e8e8e" stroke-width=".5"/></svg><svg class="ic" style="left:1232px;top:51px" width="24" height="24" viewBox="0 0 24 24"><path d="M2.1,18.3L10.9,14.4L22,16.8L12.8,22.6z" fill="#d9d9d9" stroke="#333" stroke-width="1.1" stroke-linejoin="round"/><path d="M5.2,18.5L11.2,15.9L18.8,17.5L12.6,21.2z" fill="#f6f6f6" stroke="#555" stroke-width=".8" stroke-linejoin="round"/><path d="M1.6,6.6L10.9,0.3L22,4.7L12.8,9.5z" fill="#2a7cf0" stroke="#0d1d66" stroke-width=".7" stroke-linejoin="round"/><path d="M1.6,6.6L12.8,9.5V16.8L1.6,13.4z" fill="#0f46cf" stroke="#0d1d66" stroke-width=".7" stroke-linejoin="round"/><path d="M12.8,9.5L22,4.7V12.2L12.8,16.8z" fill="#1f63e0" stroke="#0d1d66" stroke-width=".7" stroke-linejoin="round"/></svg><svg class="ic" style="left:1268px;top:51px" width="24" height="24" viewBox="0 0 24 24"><path d="M2,5.5L8,1.5L12.5,4L9,8L4.5,8.5z" fill="none" stroke="#0a0af0" stroke-width="1.3"/><ellipse cx="17.3" cy="4.5" rx="5.3" ry="3.4" fill="none" stroke="#0a0af0" stroke-width="1.3"/><path d="M2,18.5L8,15L12.5,17.5L9,22L4.5,21.5z" fill="none" stroke="#f01010" stroke-width="1.3"/><ellipse cx="17.3" cy="18.5" rx="5.3" ry="3.4" fill="none" stroke="#f01010" stroke-width="1.3"/><path d="M7.5,6.8L11,10.8H9.2V15.8H5.8V10.8H4z" fill="#1f66e6" stroke="#0d1d80" stroke-width=".5"/><path d="M17,16.3L13.5,12.3H15.3V7.3H18.7V12.3H20.5z" fill="#1f66e6" stroke="#0d1d80" stroke-width=".5"/></svg><svg class="ic" style="left:1304px;top:51px" width="24" height="24" viewBox="0 0 24 24"><rect x="2.3" y="3.2" width="3.4" height="6.8" fill="#000" fill-opacity=".4" transform="translate(.8,.8)"/><rect x="2.3" y="3.2" width="3.4" height="6.8" fill="#1f66e6" stroke="#0f2f9a" stroke-width=".6"/><rect x="2.3" y="13.9" width="3.4" height="6.8" fill="#000" fill-opacity=".4" transform="translate(.8,.8)"/><rect x="2.3" y="13.9" width="3.4" height="6.8" fill="#1f66e6" stroke="#0f2f9a" stroke-width=".6"/><rect x="9.6" y="3.2" width="3.4" height="6.8" fill="#000" fill-opacity=".4" transform="translate(.8,.8)"/><rect x="9.6" y="3.2" width="3.4" height="6.8" fill="#1f66e6" stroke="#0f2f9a" stroke-width=".6"/><rect x="9.6" y="13.9" width="3.4" height="6.8" fill="#000" fill-opacity=".4" transform="translate(.8,.8)"/><rect x="9.6" y="13.9" width="3.4" height="6.8" fill="#1f66e6" stroke="#0f2f9a" stroke-width=".6"/><rect x="17.4" y="3.2" width="3.4" height="6.8" fill="#000" fill-opacity=".4" transform="translate(.8,.8)"/><rect x="17.4" y="3.2" width="3.4" height="6.8" fill="#1f66e6" stroke="#0f2f9a" stroke-width=".6"/><rect x="17.4" y="13.9" width="3.4" height="6.8" fill="#000" fill-opacity=".4" transform="translate(.8,.8)"/><rect x="17.4" y="13.9" width="3.4" height="6.8" fill="#1f66e6" stroke="#0f2f9a" stroke-width=".6"/></svg><svg class="ic" style="left:1340px;top:51px" width="24" height="24" viewBox="0 0 24 24"><path d="M4.5,19.5C11,19 9,11.5 11.5,11C14.5,10.5 13,5 19.5,4.5" fill="none" stroke="#111" stroke-width="1.4"/><rect x="2.3" y="14.4" width="4.1" height="7" fill="#1f66e6" stroke="#0f2f9a" stroke-width=".6"/><rect x="7.6" y="9.4" width="7.3" height="3.2" fill="#1f66e6" stroke="#0f2f9a" stroke-width=".6"/><rect x="17.8" y="1.8" width="3.9" height="6.8" fill="#1f66e6" stroke="#0f2f9a" stroke-width=".6"/></svg><svg class="ic" style="left:1376px;top:51px" width="24" height="24" viewBox="0 0 24 24"><path d="M3.9,7.2C3.5,2.5 7.5,0.4 11.8,0.4C16.5,0.4 20.5,2.5 20.1,7.2L20.5,7.9C21,11 23.4,12.5 23.2,15.1C23,17.5 21,18 20.5,20C19.5,22.5 17.5,23.3 15.6,23C14,22.8 13,21.9 11.8,21.9C10.6,21.9 9.6,22.8 8.4,23C6.5,23.3 4.5,22.5 3.5,20C3,18 1.5,17.5 1.3,14.7C1.1,12.5 3,11 3.5,7.9z" fill="url(#gtroop)" stroke="#1a1a1a" stroke-width=".9" stroke-linejoin="round"/><path d="M3.2,7.6C8.5,8.3 15.2,8.3 20.5,7.6" fill="none" stroke="#111" stroke-width="1.2"/><path d="M5.4,8.7L10,9.1L8.8,10.7L6.2,10.3zM13.7,9.1L18.3,8.7L17.5,10.3L14.9,10.7z" fill="#0a0a0a"/><path d="M6.6,16.3C8.5,15.8 9.5,13.7 11.5,13.7C13.5,13.7 14.5,15.8 16.4,16.3" fill="none" stroke="#111" stroke-width="1.1" stroke-linecap="round"/><circle cx="5.1" cy="12.5" r=".6" fill="#111"/><circle cx="18.3" cy="12.5" r=".6" fill="#111"/><ellipse cx="7.3" cy="19.7" rx=".8" ry="1.1" fill="#111"/><ellipse cx="16" cy="19.7" rx=".8" ry="1.1" fill="#111"/><rect x="10.6" y="18" width="1.9" height="3.4" rx=".6" fill="#4a4a4a"/></svg><svg class="ic" style="left:1412px;top:51px" width="24" height="24" viewBox="0 0 24 24"><rect x="6.6" y="18.5" width="15.4" height="2" fill="#c2c2c2"/><rect x="6.6" y="5.2" width="15.3" height="13.5" fill="#dedede" stroke="#c4c4c4" stroke-width=".7"/><path d="M7,18.3L20.3,8.8V18.3z" fill="#f3f3f3"/><path d="M20.4,8.6V17.8" stroke="#8a8a8a" stroke-width=".7"/><circle cx="15.5" cy="13.2" r="2.3" fill="none" stroke="#8486f4" stroke-width="1"/><path d="M1.5,7.9H8.3V4.2L13.9,9.8L8.3,15.1V12.8H1.5z" fill="url(#gbl2)" stroke="#000" stroke-width="1.3" stroke-linejoin="round"/></svg><div class="hd" style="left:1448px;top:60px"></div><div class="sb" style="left:1456px"></div><svg class="ic" style="left:1458px;top:53px" width="20" height="20" viewBox="0 0 24 24"><path d="M7.8,12V8.5A4.2,4.2 0 0 1 16.2,8.5V12" fill="none" stroke="#053a2e" stroke-width="3.4"/><path d="M7.8,12V8.5A4.2,4.2 0 0 1 16.2,8.5V12" fill="none" stroke="#3fc29c" stroke-width="1.8"/><rect x="5.8" y="11.3" width="12.4" height="9" fill="url(#glock)" stroke="#053a2e" stroke-width="1.15"/></svg><div class="sb" style="left:1482px"></div><svg class="ic" style="left:1484px;top:53px" width="20" height="20" viewBox="0 0 24 24"><path d="M4,19.5L20,5" fill="none" stroke="#053a2e" stroke-width="4.0" stroke-linecap="butt" stroke-linejoin="miter"/><path d="M4,19.5L20,5" fill="none" stroke="#10a97f" stroke-width="2.6" stroke-linecap="butt"/><ellipse cx="12" cy="12.2" rx="5.4" ry="3.1" transform="rotate(-42 12 12.2)" fill="#10a97f" stroke="#053a2e" stroke-width="1.15"/></svg><div class="sb" style="left:1508px"></div><svg class="ic" style="left:1510px;top:53px" width="20" height="20" viewBox="0 0 24 24"><path d="M10.3,3.5H13.7V17.3H21V20.7H3V17.3H10.3z" fill="#10a97f" stroke="#053a2e" stroke-width="1"/></svg><div class="sb" style="left:1534px"></div><svg class="ic" style="left:1536px;top:53px" width="20" height="20" viewBox="0 0 24 24"><path d="M6,2.8H9.6V6H14.4V2.8H18V6H21.2V9.6H18V14.4H21.2V18H18V21.2H14.4V18H9.6V21.2H6V18H2.8V14.4H6V9.6H2.8V6H6zM9.6,9.6V14.4H14.4V9.6z" fill="#10a97f" stroke="#053a2e" stroke-width="1.25" fill-rule="evenodd" stroke-linejoin="round"/></svg><div class="sb" style="left:1560px"></div><svg class="ic" style="left:1562px;top:53px" width="20" height="20" viewBox="0 0 24 24"><path d="M3.3,6L6,3.3L12,9.3L18,3.3L20.7,6L14.7,12L20.7,18L18,20.7L12,14.7L6,20.7L3.3,18L9.3,12z" fill="#10a97f" stroke="#053a2e" stroke-width="1.25" stroke-linejoin="round"/></svg><div class="sb" style="left:1586px"></div><svg class="ic" style="left:1588px;top:53px" width="20" height="20" viewBox="0 0 24 24"><path d="M9.4,4.5L22.3,12.6" fill="none" stroke="#053a2e" stroke-width="3.6" stroke-linecap="butt" stroke-linejoin="miter"/><path d="M9.4,4.5L22.3,12.6" fill="none" stroke="#10a97f" stroke-width="2.2" stroke-linecap="butt"/><path d="M5.3,11.4L18.8,19.6" fill="none" stroke="#053a2e" stroke-width="3.6" stroke-linecap="butt" stroke-linejoin="miter"/><path d="M5.3,11.4L18.8,19.6" fill="none" stroke="#10a97f" stroke-width="2.2" stroke-linecap="butt"/></svg><div class="sb" style="left:1612px"></div><svg class="ic" style="left:1614px;top:53px" width="20" height="20" viewBox="0 0 24 24"><path d="M7.7,16.7L20.5,5.5" fill="none" stroke="#053a2e" stroke-width="3.6" stroke-linecap="butt" stroke-linejoin="miter"/><path d="M7.7,16.7L20.5,5.5" fill="none" stroke="#10a97f" stroke-width="2.2" stroke-linecap="butt"/><circle cx="7.7" cy="16.7" r="3.8" fill="#10a97f" stroke="#053a2e" stroke-width="1.15"/></svg><div class="sb" style="left:1638px"></div><svg class="ic" style="left:1640px;top:53px" width="20" height="20" viewBox="0 0 24 24"><circle cx="12" cy="12" r="6" fill="none" stroke="#053a2e" stroke-width="1"/><circle cx="12" cy="5.6" r="2.4" fill="#10a97f" stroke="#053a2e" stroke-width="1.05"/><circle cx="12" cy="18.4" r="2.4" fill="#10a97f" stroke="#053a2e" stroke-width="1.05"/><circle cx="5.6" cy="12" r="2.4" fill="#10a97f" stroke="#053a2e" stroke-width="1.05"/><circle cx="18.4" cy="12" r="2.4" fill="#10a97f" stroke="#053a2e" stroke-width="1.05"/></svg><div class="sb" style="left:1664px"></div><svg class="ic" style="left:1666px;top:53px" width="20" height="20" viewBox="0 0 24 24"><circle cx="12" cy="12" r="7.6" fill="none" stroke="#053a2e" stroke-width="3.2"/><circle cx="12" cy="12" r="7.6" fill="none" stroke="#10a97f" stroke-width="1.7"/><circle cx="12" cy="12" r="3.3" fill="none" stroke="#053a2e" stroke-width="3"/><circle cx="12" cy="12" r="3.3" fill="none" stroke="#10a97f" stroke-width="1.6"/></svg><div class="sb" style="left:1690px"></div><svg class="ic" style="left:1692px;top:53px" width="20" height="20" viewBox="0 0 24 24"><circle cx="5" cy="12" r="2.1" fill="#10a97f" stroke="#053a2e" stroke-width="1"/><circle cx="12" cy="12" r="2.1" fill="#10a97f" stroke="#053a2e" stroke-width="1"/><circle cx="19" cy="12" r="2.1" fill="#10a97f" stroke="#053a2e" stroke-width="1"/></svg><div class="sb hov" style="left:1716px"></div><svg class="ic" style="left:1718px;top:53px" width="20" height="20" viewBox="0 0 24 24"><path d="M4.5,10.8L17.2,18.5" fill="none" stroke="#053a2e" stroke-width="3.6" stroke-linecap="butt" stroke-linejoin="miter"/><path d="M4.5,10.8L17.2,18.5" fill="none" stroke="#10a97f" stroke-width="2.2" stroke-linecap="butt"/><circle cx="16" cy="7.2" r="2.5" fill="#10a97f" stroke="#053a2e" stroke-width="1"/></svg><div class="sb" style="left:1742px"></div><svg class="ic" style="left:1744px;top:53px" width="20" height="20" viewBox="0 0 24 24"><path d="M10.3,5H13.7V10.3H19V13.7H13.7V19H10.3V13.7H5V10.3H10.3z" fill="#10a97f" stroke="#053a2e" stroke-width="1.25" stroke-linejoin="round"/></svg><div class="sb" style="left:1768px"></div><svg class="ic" style="left:1770px;top:53px" width="20" height="20" viewBox="0 0 24 24"><path d="M9.5,19.5V8.5H19.5V11" fill="none" stroke="#053a2e" stroke-width="1.5"/><path d="M9.5,8.5V5M19.5,8.5V5.5M5.5,8.5H9.5M5.5,19.5H12.5" stroke="#0c8a68" stroke-width="1.3"/><path d="M6.5,9.5V18.5" stroke="#10a97f" stroke-width="1.2"/><text x="10.5" y="6" font-family="Liberation Sans,sans-serif" font-weight="bold" font-size="5.5" fill="#053a2e">1,00</text><text x="3" y="16" font-family="Liberation Sans,sans-serif" font-weight="bold" font-size="5.5" fill="#053a2e">3</text></svg><div class="sb" style="left:1794px"></div><svg class="ic" style="left:1796px;top:53px" width="20" height="20" viewBox="0 0 24 24"><rect x="3.8" y="3.8" width="16.4" height="16.4" fill="#10a97f" stroke="#053a2e" stroke-width="1.1"/><circle cx="9.3" cy="14.4" r="1.8" fill="none" stroke="#053a2e" stroke-width="1.15"/></svg>
<!-- workbench combo -->
<div class="abs btn" style="left:457px;top:11px;width:182px;height:23px"></div>
<svg class="ic" style="left:461px;top:14px" width="18" height="18" viewBox="0 0 24 24"><path d="M5.5,1V21H23" fill="none" stroke="#b9b9b9" stroke-width="1"/><path d="M9,2.5L17.5,15H9z" fill="#f3e34a" stroke="#8a7a10" stroke-width="1"/><path d="M11.5,8.5L14,12.5H11.5z" fill="#fbf6c4" stroke="#8a7a10" stroke-width=".6"/><path d="M1.5,12.5H4.5V16H21V19.5H4.5V23H1.5z" fill="#f0911a" stroke="#8a4b08" stroke-width="1" stroke-linejoin="round"/></svg>
<div class="t" style="left:481.5px;top:15px;font-size:15px;transform:scaleX(1.085)">Draft</div>
<div class="abs" style="left:626.2px;top:18.3px;width:0;height:0;border-left:3.2px solid transparent;border-right:3.2px solid transparent;border-bottom:3.4px solid #5f5c57"></div>
<div class="abs" style="left:626.2px;top:27.5px;width:0;height:0;border-left:3.2px solid transparent;border-right:3.2px solid transparent;border-top:3.4px solid #77746f"></div>
<!-- row2 widgets -->
<div class="abs btn" style="left:13px;top:51px;width:83px;height:24px"></div>
<div class="t" style="left:47px;top:54.5px;font-size:15px;transform:scaleX(1.067)">Auto</div>
<div class="abs btn" style="left:98px;top:51px;width:20px;height:24px"></div>
<div class="abs btn" style="left:120px;top:51px;width:20px;height:24px"></div><div class="abs" style="left:122px;top:55px;width:16px;height:16px;background:#000"></div>
<div class="abs btn" style="left:142px;top:51px;width:20px;height:24px"></div><div class="abs" style="left:144px;top:55px;width:16px;height:16px;background:#c9c9c9"></div>
<div class="abs spin" style="left:164px;top:53px;width:47px;height:20px"></div><div class="abs spinr" style="left:195px;top:54px;width:15px;height:18px"></div>
<div class="t" style="left:169px;top:56px;font-size:15px;transform:scaleX(0.975)">2px</div>
<div class="abs spin" style="left:214px;top:53px;width:62px;height:20px"></div><div class="abs spinr" style="left:260px;top:54px;width:15px;height:18px"></div>
<div class="t" style="left:220px;top:56px;font-size:15px;transform:scaleX(0.935)">0,20</div>
<div class="abs btn" style="left:279px;top:51px;width:20px;height:24px"></div>
<svg class="ic" style="left:0;top:44px" width="330" height="38" viewBox="0 44 330 38">
<path d="M30,55V71M41.2,55V70.5M28.5,58.6L43,54M28.5,67.6L43,63.5" stroke="#4fb4bf" stroke-width=".7" fill="none"/>
<path d="M29.7,59.2L40.7,55.4V67.2L29.9,70.7z" fill="#3cc4d0" stroke="#1a8a98" stroke-width=".8"/>
<path d="M32.9,61.6L38.5,58.1V63.7L32.9,66.4z" fill="#f4f3f2" stroke="#111" stroke-width="1.1"/>
<path d="M101.5,64.6L108,61.5" stroke="#0d7f80" stroke-width="4.2" stroke-linecap="round"/><path d="M101.5,64.6L108,61.5" stroke="#14b8b4" stroke-width="2.6" stroke-linecap="round"/>
<path d="M105.9,59.4L115,58.1L110.7,66.2L108.6,63.2z" fill="#c9efe4" stroke="#3a8d7c" stroke-width=".9" stroke-linejoin="round"/>
<path d="M201,60.3L203.4,57.8L205.8,60.3zM266.1,60.3L268.5,57.8L270.9,60.3z" fill="#5f5c57"/>
<path d="M200.6,67L203.4,70.2L206.2,67zM265.7,67L268.5,70.2L271.3,67z" fill="#77746f"/>
<rect x="283.1" y="55.8" width="5.5" height="13.9" rx=".8" fill="#5a5a5a" stroke="#444" stroke-width=".6"/>
<rect x="284.2" y="57" width="3.4" height="2.3" fill="#f01414"/><rect x="284.2" y="59.3" width="3.4" height="3.2" fill="#f6ea10"/><rect x="284.2" y="65.8" width="3.4" height="3" fill="#10e010"/>
<path d="M285,62.5H290.8V59.6L296,64.2L290.8,68.7V66.1H285z" fill="url(#gbl2)" stroke="#0f2f9a" stroke-width=".6" stroke-linejoin="round"/>
</svg>

<!-- combo view -->
<div class="t" style="left:3px;top:88px;font-size:15px;transform:scaleX(0.986)">Combo View</div>
<svg class="ic" style="left:293px;top:90px" width="11" height="11" viewBox="0 0 11 11"><rect x=".5" y=".5" width="10" height="10" rx="2" fill="none" stroke="#6d6a65"/><rect x="2.5" y="4.5" width="4" height="4" fill="#f2f1f0" stroke="#5d5a55"/><path d="M4.5,4V2.5h4v4H7" fill="none" stroke="#5d5a55"/></svg>
<svg class="ic" style="left:310px;top:90px" width="11" height="11" viewBox="0 0 11 11"><rect x=".5" y=".5" width="10" height="10" rx="2" fill="none" stroke="#6d6a65"/><path d="M2.8,2.8l5.4,5.4M8.2,2.8l-5.4,5.4" stroke="#5a5752" stroke-width="2"/></svg>
<!-- tab pane -->
<div class="abs" style="left:2px;top:137px;width:322px;height:1011px;border:1px solid #b9b4ad;border-radius:0 3px 3px 3px"></div>
<div class="abs" style="left:60px;top:111px;width:51px;height:27px;border:1px solid #b9b4ad;border-bottom:0;border-radius:4px 4px 0 0;background:linear-gradient(#f6f5f4,#dcd9d5)"></div>
<div class="t" style="left:67.5px;top:116px;font-size:15px;transform:scaleX(0.934)">Tasks</div>
<div class="abs" style="left:2px;top:108px;width:58px;height:30px;border:1px solid #b9b4ad;border-bottom:0;border-radius:4px 4px 0 0;background:#f5f4f2"></div>
<div class="t" style="left:9px;top:115px;font-size:15px;transform:scaleX(1.056)">Model</div>
<!-- tree -->
<div class="abs frame" style="left:3px;top:139px;width:319px;height:460px"></div>
<div class="abs" style="left:4px;top:140px;width:317px;height:25px;background:#f2f1f0"></div>
<div class="abs hdr" style="left:4px;top:140px;width:159px;height:25px"></div>
<div class="t" style="left:7.5px;top:144.5px;font-size:15px;transform:scaleX(1.02)">Labels &amp; Attributes</div>
<div class="t" style="left:7px;top:167px;font-size:15px;transform:scaleX(1.027)">Application</div>
<div class="abs" style="left:12.9px;top:190px;width:0;height:0;border-left:3.6px solid transparent;border-right:3.6px solid transparent;border-top:6.2px solid #5c5a57"></div>
<svg class="ic" style="left:28px;top:185px" width="16" height="16" viewBox="0 0 16 16"><rect x="0.9" y="0.6" width="12" height="13.9" fill="#e9e9e9" stroke="#cfcfcf" stroke-width=".8"/><path d="M0.5,14.7H13.3" stroke="#a9a9a9" stroke-width=".9"/><path d="M5,6.2A3.3,3.3 0 0 1 11.6,6.2V8H5z" fill="#e0201c"/><path d="M10.2,8.5H12.6" stroke="#222" stroke-width=".9"/><path d="M3,7.3L4.2,6.6H10.1V11.8L8.9,12.8H3z" fill="#2a3fc8" stroke="#1a2a8a" stroke-width=".5"/><path d="M3,7.3H8.9V12.8M8.9,7.3L10.1,6.6" fill="none" stroke="#6a80e8" stroke-width=".5"/></svg>
<div class="t" style="left:49.5px;top:186px;font-size:15px;font-weight:bold;transform:scaleX(0.99)">T09-ejemplo-ini</div>
<svg class="ic" style="left:46px;top:204px" width="16" height="16" viewBox="0 0 16 16"><path d="M1.3,4L5,1.5L14.2,2.5V11.5L9.4,14.2L1.3,12.8z" fill="#0a1a78" stroke="#0a1250" stroke-width=".8" stroke-linejoin="round"/><path d="M1.3,4L9.4,4.5V14.2L1.3,12.8z" fill="url(#gcubef)"/><path d="M9.4,4.5L14.2,2.5V11.5L9.4,14.2z" fill="#0c2294"/><path d="M1.3,4L5,1.5L14.2,2.5L9.4,4.5z" fill="#2a5ad8"/><path d="M3.5,3.2C6,2.2 9,2.4 11.5,3" fill="none" stroke="#6aa0f8" stroke-width=".8"/><path d="M9.4,4V14.4M1,13L9.4,14.4L15,11.3" fill="none" stroke="#ee2a1a" stroke-width="1"/></svg>
<div class="t" style="left:69px;top:205px;font-size:15px;transform:scaleX(0.97)">Cube</div>
<svg class="ic" style="left:46px;top:223px" width="16" height="16" viewBox="0 0 16 16"><path d="M1.3,4L5,1.5L14.2,2.5V11.5L9.4,14.2L1.3,12.8z" fill="#0a1a78" stroke="#0a1250" stroke-width=".8" stroke-linejoin="round"/><path d="M1.3,4L9.4,4.5V14.2L1.3,12.8z" fill="url(#gcubef)"/><path d="M9.4,4.5L14.2,2.5V11.5L9.4,14.2z" fill="#0c2294"/><path d="M1.3,4L5,1.5L14.2,2.5L9.4,4.5z" fill="#2a5ad8"/><path d="M3.5,3.2C6,2.2 9,2.4 11.5,3" fill="none" stroke="#6aa0f8" stroke-width=".8"/><path d="M9.4,4V14.4M1,13L9.4,14.4L15,11.3" fill="none" stroke="#ee2a1a" stroke-width="1"/></svg>
<div class="t" style="left:69px;top:224px;font-size:15px;font-weight:bold;transform:scaleX(0.94)">Cube001</div>
<!-- splitter -->
<div class="abs" style="left:158px;top:600px;width:9px;height:4px;background:repeating-linear-gradient(90deg,#c4c0ba 0,#c4c0ba 1px,#fff 1px,#fff 2px,transparent 2px,transparent 3px)"></div>
<!-- property -->
<div class="abs" style="left:3px;top:605px;width:319px;height:512px;border:1px solid #b9b4ad;border-radius:3px"></div>
<div class="abs frame" style="left:5px;top:607px;width:315px;height:508px"></div>
<div class="abs hdr" style="left:6px;top:608px;width:100px;height:25px"></div>
<div class="abs hdr" style="left:106px;top:608px;width:213px;height:25px;border-right:0"></div>
<div class="t" style="left:9px;top:613px;font-size:15px;transform:scaleX(1.046)">Property</div>
<div class="t" style="left:110px;top:613px;font-size:15px;transform:scaleX(1.01)">Value</div>
<!-- bottom tabs -->
<svg class="ic" style="left:0px;top:1116px" width="104" height="32" viewBox="0 0 104 32"><path d="M3.2 1.5L12 25.5Q13.7 30 18 30H37.5Q41.8 30 43.3 25.5L52.4 1.5z" fill="#ffffff"/><path d="M3.2 1.5L12 25.5Q13.7 30 18 30H37.5Q41.8 30 43.3 25.5L52.4 1.5" fill="none" stroke="#55524e" stroke-width="1.1"/><path d="M53.3 3.5L62 25Q63.7 29.3 68 29.3H84.5Q88.8 29.3 90.3 25L98.6 3.5" fill="#f2f1f0" stroke="#55524e" stroke-width="1.1"/></svg>
<div class="t" style="left:11.3px;top:1124px;font-size:15px;transform:scaleX(1.02)">View</div>
<div class="t" style="left:60.4px;top:1122.5px;font-size:15px;transform:scaleX(0.97)">Data</div>
<!-- dock splitter handle right of panel -->
<div class="abs" style="left:325px;top:613px;width:4px;height:9px;background:repeating-linear-gradient(#c4c0ba 0,#c4c0ba 1px,#fff 1px,#fff 2px,transparent 2px,transparent 3px)"></div>
<!-- 3d view -->
<div class="abs" style="left:329px;top:82px;width:1527px;height:1035px;background:#fdfdfb"></div>
<div class="abs v3dwrap"><div class="abs" style="left:0;top:0;width:1526px;height:1px;background:#22225c;z-index:2"></div><svg class="v3d" width="1526" height="1033" viewBox="0 0 1526 1033"><path d="M0.0 12.4L18.4 0.0M0.0 39.5L58.5 0.0M0.0 66.7L98.6 0.0M0.0 1020.9L44.0 1033.0M0.0 93.8L138.7 -0.0M0.0 1002.8L109.8 1033.0M0.0 120.9L178.8 0.0M0.0 984.7L175.6 1033.0M0.0 148.0L218.9 0.0M0.0 966.7L241.3 1033.0M0.0 175.1L258.9 0.0M0.0 948.6L307.1 1033.0M0.0 202.2L299.0 0.0M0.0 930.5L372.9 1033.0M0.0 229.3L339.1 0.0M0.0 912.4L438.7 1033.0M0.0 283.5L419.3 0.0M0.0 876.3L570.2 1033.0M0.0 310.6L459.4 -0.0M0.0 858.2L636.0 1033.0M0.0 337.7L499.5 0.0M0.0 840.1L701.7 1033.0M0.0 364.8L539.6 0.0M0.0 822.1L767.5 1033.0M0.0 391.9L579.7 0.0M0.0 804.0L833.3 1033.0M-0.0 419.0L619.8 0.0M0.0 785.9L899.1 1033.0M0.0 446.1L659.8 0.0M0.0 767.8L964.8 1033.0M0.0 473.2L699.9 0.0M0.0 749.8L1030.6 1033.0M0.0 500.3L740.0 0.0M0.0 731.7L1096.4 1033.0M0.0 554.5L820.2 0.0M0.0 695.5L1227.9 1033.0M0.0 581.6L860.3 0.0M0.0 677.5L1293.7 1033.0M0.0 608.8L900.4 0.0M0.0 659.4L1359.5 1033.0M0.0 635.9L940.5 0.0M0.0 641.3L1425.2 1033.0M0.0 663.0L980.6 0.0M0.0 623.2L1491.0 1033.0M0.0 690.1L1020.7 0.0M0.0 605.2L1526.0 1024.5M0.0 717.2L1060.8 0.0M0.0 587.1L1526.0 1006.5M0.0 744.3L1100.8 0.0M0.0 569.0L1526.0 988.4M0.0 771.4L1140.9 0.0M0.0 550.9L1526.0 970.3M0.0 825.6L1221.1 0.0M0.0 514.8L1526.0 934.2M0.0 852.7L1261.2 0.0M0.0 496.7L1526.0 916.1M0.0 879.8L1301.3 0.0M0.0 478.6L1526.0 898.0M0.0 906.9L1341.4 0.0M0.0 460.5L1526.0 879.9M0.0 934.0L1381.5 0.0M0.0 442.5L1526.0 861.9M0.0 961.1L1421.6 0.0M0.0 424.4L1526.0 843.8M0.0 988.2L1461.7 0.0M0.0 406.3L1526.0 825.7M0.0 1015.3L1501.8 0.0M0.0 388.2L1526.0 807.6M13.9 1033.0L1526.0 10.7M0.0 370.2L1526.0 789.6M94.1 1033.0L1526.0 64.9M0.0 334.0L1526.0 753.4M134.2 1033.0L1526.0 92.0M0.0 315.9L1526.0 735.3M174.3 1033.0L1526.0 119.1M0.0 297.9L1526.0 717.3M214.4 1033.0L1526.0 146.2M0.0 279.8L1526.0 699.2M254.5 1033.0L1526.0 173.3M0.0 261.7L1526.0 681.1M294.6 1033.0L1526.0 200.4M0.0 243.6L1526.0 663.0M334.7 1033.0L1526.0 227.6M0.0 225.6L1526.0 644.9M374.8 1033.0L1526.0 254.7M0.0 207.5L1526.0 626.9M414.9 1033.0L1526.0 281.8M0.0 189.4L1526.0 608.8M495.0 1033.0L1526.0 336.0M0.0 153.3L1526.0 572.6M535.1 1033.0L1526.0 363.1M0.0 135.2L1526.0 554.6M575.2 1033.0L1526.0 390.2M0.0 117.1L1526.0 536.5M615.3 1033.0L1526.0 417.3M0.0 99.0L1526.0 518.4M655.4 1033.0L1526.0 444.4M0.0 81.0L1526.0 500.3M695.5 1033.0L1526.0 471.5M0.0 62.9L1526.0 482.3M735.6 1033.0L1526.0 498.6M0.0 44.8L1526.0 464.2M775.7 1033.0L1526.0 525.7M0.0 26.7L1526.0 446.1M815.8 1033.0L1526.0 552.8M0.0 8.7L1526.0 428.0M895.9 1033.0L1526.0 607.0M100.1 0.0L1526.0 391.9M936.0 1033.0L1526.0 634.1M165.8 0.0L1526.0 373.8M976.1 1033.0L1526.0 661.2M231.6 0.0L1526.0 355.7M1016.2 1033.0L1526.0 688.3M297.4 0.0L1526.0 337.7M1056.3 1033.0L1526.0 715.4M363.1 0.0L1526.0 319.6M1096.4 1033.0L1526.0 742.5M428.9 0.0L1526.0 301.5M1136.5 1033.0L1526.0 769.7M494.7 0.0L1526.0 283.4M1176.6 1033.0L1526.0 796.8M560.5 0.0L1526.0 265.4M1216.7 1033.0L1526.0 823.9M626.2 0.0L1526.0 247.3M1296.8 1033.0L1526.0 878.1M757.8 0.0L1526.0 211.1M1336.9 1033.0L1526.0 905.2M823.5 0.0L1526.0 193.1M1377.0 1033.0L1526.0 932.3M889.3 0.0L1526.0 175.0M1417.1 1033.0L1526.0 959.4M955.1 0.0L1526.0 156.9M1457.2 1033.0L1526.0 986.5M1020.9 0.0L1526.0 138.8M1497.3 1033.0L1526.0 1013.6M1086.6 0.0L1526.0 120.7M1152.4 0.0L1526.0 102.7M1218.2 0.0L1526.0 84.6M1283.9 -0.0L1526.0 66.5M1415.5 0.0L1526.0 30.4M1481.3 0.0L1526.0 12.3" stroke="rgba(54,54,86,0.3)" stroke-width="1" fill="none" shape-rendering="crispEdges"/><path d="M0.0 256.4L379.2 0.0M0.0 894.4L504.4 1033.0M0.0 527.4L780.1 0.0M0.0 713.6L1162.2 1033.0M54.0 1033.0L1526.0 37.8M0.0 352.1L1526.0 771.5M454.9 1033.0L1526.0 308.9M0.0 171.3L1526.0 590.7M855.9 1033.0L1526.0 579.9M34.3 0.0L1526.0 410.0M1256.8 1033.0L1526.0 851.0M692.0 0.0L1526.0 229.2M1349.7 0.0L1526.0 48.4" stroke="rgba(44,44,72,0.8)" stroke-width="1" fill="none" shape-rendering="crispEdges"/><path d="M0.0 798.5L1181.0 0.0M0.0 532.9L1526.0 952.2" stroke="rgba(34,34,58,0.9)" stroke-width="1.35" fill="none"/><polygon points="272.6,301.5 557.7,379.8 747.8,251.3 462.7,173.0" fill="#666666"/><polygon points="279.3,609.6 564.4,688.0 557.7,379.8 272.6,301.5" fill="#a3a3a3"/><polygon points="564.4,688.0 754.5,559.4 747.8,251.3 557.7,379.8" fill="#737373"/><g fill="none" stroke="#141414" stroke-width="2" stroke-linejoin="round"><polygon points="272.6,301.5 557.7,379.8 747.8,251.3 462.7,173.0"/><polygon points="279.3,609.6 564.4,688.0 557.7,379.8 272.6,301.5"/><polygon points="564.4,688.0 754.5,559.4 747.8,251.3 557.7,379.8"/></g><polygon points="1037.5,653.8 1123.0,677.3 1237.0,600.2 1151.5,576.7" fill="#666666"/><polygon points="1039.5,746.2 1125.0,769.7 1123.0,677.3 1037.5,653.8" fill="#a3a3a3"/><polygon points="1125.0,769.7 1239.0,692.6 1237.0,600.2 1123.0,677.3" fill="#737373"/><g fill="none" stroke="#141414" stroke-width="2" stroke-linejoin="round"><polygon points="1037.5,653.8 1123.0,677.3 1237.0,600.2 1151.5,576.7"/><polygon points="1039.5,746.2 1125.0,769.7 1123.0,677.3 1037.5,653.8"/><polygon points="1125.0,769.7 1239.0,692.6 1237.0,600.2 1123.0,677.3"/></g><g transform="translate(-1,0)"><line x1="1475" y1="981" x2="1475" y2="950" stroke="#191985" stroke-width="1.6"/><polygon points="1475,944 1471.3,958 1478.7,958" fill="#191985"/><line x1="1475" y1="981" x2="1486" y2="974" stroke="#198c19" stroke-width="1.6"/><polygon points="1492,970 1482,972 1486,978" fill="#198c19"/><line x1="1475" y1="981" x2="1500" y2="988.5" stroke="#8c1919" stroke-width="1.6"/><polygon points="1509,991 1497,984 1495,991.5" fill="#8c1919"/><g font-family="Liberation Sans,sans-serif" font-size="9" fill="#111"><text x="1477" y="946">Z</text><text x="1493" y="972">Y</text><text x="1512" y="992">X</text></g></g>
</svg></div>
<!-- mdi tab -->
<div class="abs" style="left:331px;top:1116px;width:185px;height:32px;border:1px solid #c2beb8;border-top:0;border-radius:0 0 4px 4px;background:linear-gradient(#f7f6f5,#fdfdfc)"></div>
<svg class="ic" style="left:337px;top:1124px" width="16" height="16" viewBox="0 0 16 16"><path d="M1,1H9.5V4H4.5V6.5H8V9.5H4.5V14.5H1z" fill="#e8321a" stroke="#8a1408" stroke-width=".5"/><path d="M10,4.8L11.2,4.8L11.6,6.3L12.9,6.8L14.2,6L15.1,6.9L14.3,8.2L14.8,9.5L16.3,9.9V11.1L14.8,11.5L14.3,12.8L15.1,14.1L14.2,15L12.9,14.2L11.6,14.7L11.2,16.2H10L9.6,14.7L8.3,14.2L7,15L6.1,14.1L6.9,12.8L6.4,11.5L4.9,11.1V9.9L6.4,9.5L6.9,8.2L6.1,6.9L7,6L8.3,6.8L9.6,6.3z" fill="#1f3fb8" stroke="#0f1f6a" stroke-width=".4"/><circle cx="10.6" cy="10.5" r="2" fill="#f4f4f4"/></svg>
<div class="t" style="left:360.5px;top:1125px;font-size:15px;transform:scaleX(0.962)">T09-ejemplo-ini : 1</div>
<svg class="ic" style="left:492px;top:1126px" width="14" height="14" viewBox="0 0 14 14"><path d="M2,2.3l9.8,9.8M11.8,2.3l-9.8,9.8" stroke="#5a5752" stroke-width="3.1"/></svg>
<div class="abs" style="left:0;top:1149px;width:1856px;height:1px;background:#d3cfca"></div>
<div class="abs" style="left:0;top:1150px;width:1856px;height:1px;background:#fbfaf9"></div>
<div class="t" style="right:5px;top:1157px;font-size:15px;transform-origin:100% 0;transform:scaleX(0.967)">44.54 x 30.15 mm</div>

</body></html>
